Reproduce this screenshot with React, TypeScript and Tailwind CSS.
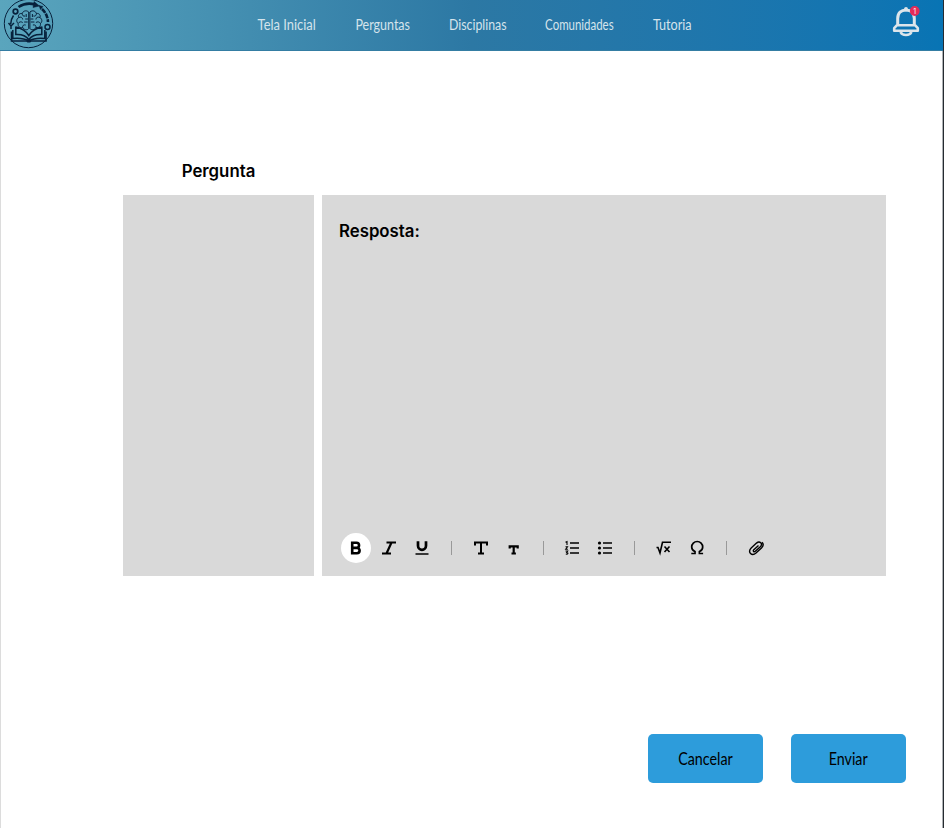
import React from "react";

const nav = [
  { label: "Tela Inicial", box: "w-[58px]", scale: "scale-x-[.89]" },
  { label: "Perguntas", box: "w-[55px]", scale: "scale-x-[.86]" },
  { label: "Disciplinas", box: "w-[57px]", scale: "scale-x-[.85]" },
  { label: "Comunidades", box: "w-[69px]", scale: "scale-x-[.79]" },
  { label: "Tutoria", box: "w-[39px]", scale: "scale-x-[.87]" },
];

function Logo() {
  return (
    <svg width="52" height="50" viewBox="0 0 52 50" fill="none" stroke="#07213c" className="shrink-0">
      <circle cx="25.500" cy="23.500" r="24.200" strokeWidth="1" />
      <path d="M15.500 7Q23 2 32 4.500" strokeWidth="2.600" />
      <path d="M31 1.500l5.500 4.500-6.500 1.500z" fill="#07213c" strokeWidth=".5" />
      <path d="M39 9Q44.500 14 45 22" strokeWidth="2.600" strokeDasharray="5 1" />
      <path d="M36 5.500l4 1-2.500 3z" fill="#07213c" strokeWidth=".5" />
      <circle cx="12.500" cy="11.500" r="2.300" strokeWidth="1.700" />
      <path d="M10.500 15.500Q8 19 7.700 24M5.500 23l2.500 3 3-3M8 25.500v3.500" strokeWidth="1.500" />
      <circle cx="44.500" cy="27" r="2.500" strokeWidth="1.500" />
      <g strokeWidth="1" transform="translate(-2.800 -.5)">
        <path d="M28.500 12.500c-3-2.500-6-.5-6.500 1.500-3-.5-4.500 2-3.500 4-2.500 1.500-2.500 4.500-.5 6-.5 3 1.500 4.500 4.500 4 1 2.500 5 3 6 1zM29.700 12.500c3-2.500 6-.5 6.500 1.500 3-.5 4.500 2 3.500 4 2.500 1.500 2.500 4.500.5 6 .5 3-1.500 4.500-4.500 4-1 2.500-5 3-6 1z" />
        <path d="M22 14c0 2 1 3 3 2.500M18.500 18c2-1 4 0 4 2M18 24c1-2 3-2 4.500-1M22.500 28c-.5-2 1-3 3-2.500M25 19.500h3M24 22.500h3.500M26 14.500v3M36.200 14c0 2-1 3-3 2.500M39.700 18c-2-1-4 0-4 2M40.200 24c-1-2-3-2-4.500-1M35.700 28c.5-2-1-3-3-2.500M33.200 19.500h-3M34.200 22.500h-3.500M32.200 14.500v3" />
      </g>
      <g transform="translate(-2.200 0)">
        <path d="M15 26.500v8q9-.5 13 5 4-5.500 13-5v-8M12 30v8.500q10-1 16 2.500 6-3.500 16-2.500V30M15 27q9 2 13 8.500Q32 29 41 27" strokeWidth="1.500" />
        <path d="M10.800 31.500V41H26q2 1.500 4 0h15.200v-9.500" strokeWidth="1.700" />
      </g>
    </svg>
  );
}

function Bell() {
  return (
    <svg width="32" height="34" viewBox="0 0 32 34" fill="none" stroke="#dce5eb">
      <path d="M7.700 21.500V15.500c0-5.500 3.500-8.500 8.300-8.500s8.300 3 8.300 8.500v6" strokeWidth="3" />
      <path d="M16 5.800v.7" strokeWidth="3.800" strokeLinecap="round" />
      <path d="M7 22.200h18l2.800 3v2.600H4.200v-2.600z" strokeWidth="2.600" strokeLinejoin="round" />
      <path d="M10.500 29c1 2.300 3 3 5.500 3s4.500-.7 5.500-3" strokeWidth="2.600" />
      <circle cx="24.700" cy="8" r="4.900" fill="#e52b58" stroke="none" />
      <text x="24.700" y="10.600" fill="white" stroke="none" fontSize="7" textAnchor="middle" className="font-['Inter',sans-serif]">1</text>
    </svg>
  );
}

function Tool({ children, active = false, w = 2 }: { children: React.ReactNode; active?: boolean; w?: number }) {
  return (
    <button className={active ? "size-[30px] rounded-full bg-white" : "size-[30px]"}>
      <svg width="30" height="30" viewBox="0 0 30 30" fill="none" stroke="black" strokeWidth={w}>
        {children}
      </svg>
    </button>
  );
}

function Divider() {
  return (
    <span className="flex w-[22.700px] justify-center">
      <span className="h-3.5 w-px bg-[#999]" />
    </span>
  );
}

export default function App() {
  return (
    <div className="flex h-[828px] w-[944px] flex-col overflow-hidden border-r border-r-[#262b30] bg-white text-black">
      <header className="flex h-[51px] shrink-0 items-center border-b border-b-[#347da3] bg-linear-to-r from-[#5aa5bd] via-[#2c78a4] to-[#0874b4] pl-[3px]">
        <Logo />
        <nav className="ml-[203px] flex flex-1 gap-[39px] pb-px text-[14.5px] leading-5 text-[#d5e4ec]">
          {nav.map((n) => (
            <a key={n.label} className={"flex justify-center whitespace-nowrap font-['Lato',sans-serif] " + n.box}>
              <span className={"inline-block " + n.scale}>{n.label}</span>
            </a>
          ))}
        </nav>
        <div className="mr-[21px] self-start pt-[3px]">
          <Bell />
        </div>
      </header>
      <main className="flex flex-1 flex-col border-r border-l border-r-[#aeb2b5] border-l-[#dcdcdc] pt-[108px] pl-[122px] font-['Inter',sans-serif]">
        <h1 className="w-[191px] text-center text-[16.8px] leading-6 font-semibold">Pergunta</h1>
        <div className="mt-3 flex h-[381px] gap-2">
          <section className="w-[191px] bg-[#d9d9d9]" />
          <section className="flex w-[564px] flex-col bg-[#d9d9d9] pt-6">
            <h2 className="pl-[17px] text-[16.8px] leading-6 font-semibold">Resposta:</h2>
            <div className="mt-auto mb-[13px] ml-[19px] flex items-center gap-[3px]">
              <Tool active w={2.6}>
                <path d="M11.200 9.800h4.300a2.500 2.500 0 0 1 0 5.100h-4.300h4.700a2.700 2.700 0 0 1 0 5.400h-4.700z" />
              </Tool>
              <Tool w={2.2}>
                <path d="M12.500 9.500H22M8 20.500h9M17.500 9.500l-5 11" />
              </Tool>
              <Tool w={2.7}>
                <path d="M11 8.300v4.500a4 4 0 0 0 8 0V8.300" />
                <path d="M8.500 21h13" strokeWidth="1.500" />
              </Tool>
              <Divider />
              <Tool>
                <path d="M9 12.500v-3h12v3M15 9.500v11M12 20.500h6" />
              </Tool>
              <Tool w={2.2}>
                <path d="M10.700 15.500v-2.200h8v2.200M14.700 13.300v7.200M12.500 20.500h4.400" />
              </Tool>
              <Divider />
              <Tool w={1.7}>
                <path d="M13 10h9M13 15h9M13 20h9" />
                <path d="M8.500 9.200 10 8.500v3.500M8.500 13.700h2l-1.800 2.500h2.200M8.500 18h2.200l-1 1.500c2 0 1.500 2-.9 1.500" strokeWidth="1.100" />
              </Tool>
              <Tool w={1.7}>
                <path d="M13 10h9M13 15h9M13 20h9" />
                <g fill="black" stroke="none">
                  <circle cx="9.500" cy="10" r="1.600" />
                  <circle cx="9.500" cy="15" r="1.600" />
                  <circle cx="9.500" cy="20" r="1.600" />
                </g>
              </Tool>
              <Divider />
              <Tool w={1.6}>
                <path d="M7.500 14.500H9l2 5.500L13.500 9.300H22M15.500 13.500l5 5.500M20.500 13.500l-5 5.500" />
              </Tool>
              <Tool w={1.7}>
                <path d="M9.300 20.500h3.700v-2c-2-.8-3.300-2.500-3.300-4.500a5.500 5.500 0 0 1 11 0c0 2-1.300 3.700-3.300 4.500v2h3.700" />
              </Tool>
              <Divider />
              <Tool w={1.4}>
                <path d="m17.500 12.500-4.700 4.200c-1.300 1.300.2 2.700 1.500 1.600l5-4.600c3.100-3-.6-6.400-3.800-3.600l-5.300 4.900c-4.300 4.300.8 8.500 4.800 5l5.500-5.100c2-2 1.900-4.200.6-5.600" />
              </Tool>
            </div>
          </section>
        </div>
        <div className="mt-[158px] mr-[36px] flex justify-end gap-7 font-['Lato',sans-serif] text-[17px]">
          <button className="h-[49px] w-[115px] rounded-[5px] bg-[#2d9cdb]">
            <span className="inline-block scale-x-[.84]">Cancelar</span>
          </button>
          <button className="h-[49px] w-[115px] rounded-[5px] bg-[#2d9cdb]">
            <span className="inline-block scale-x-[.84]">Enviar</span>
          </button>
        </div>
      </main>
    </div>
  );
}
